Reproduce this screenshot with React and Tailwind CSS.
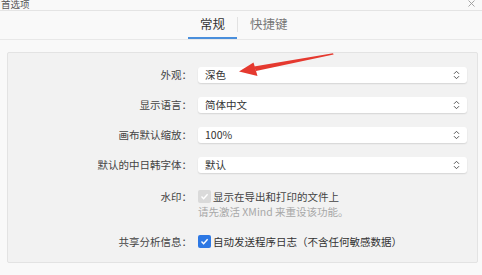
import React from 'react'

const font = { fontFamily: '"Noto Sans CJK SC", "Noto Sans", sans-serif' }

function Chevrons() {
  return (
    <svg width="7" height="10" viewBox="0 0 7 10" className="text-[#555]">
      <path d="M1 3.8 L3.5 1.3 L6 3.8" fill="none" stroke="currentColor" strokeWidth="1" />
      <path d="M1 6.2 L3.5 8.7 L6 6.2" fill="none" stroke="currentColor" strokeWidth="1" />
    </svg>
  )
}

function Select({ value }) {
  return (
    <div className="flex h-[16px] w-[269px] items-center justify-between rounded-[3px] bg-white pl-[7px] pr-[7px] text-[10.5px] text-[#333] shadow-[0_1px_1.5px_rgba(0,0,0,0.12)]">
      <span>{value}</span>
      <Chevrons />
    </div>
  )
}

function Check({ disabled }) {
  return (
    <div
      className={
        'flex h-[13px] w-[13px] shrink-0 items-center justify-center rounded-[2px] ' +
        (disabled ? 'bg-[#dadada]' : 'bg-[#2d78e4]')
      }
    >
      <svg width="9" height="9" viewBox="0 0 9 9">
        <path d="M1.5 4.6 L3.6 6.7 L7.6 2.2" fill="none" stroke="white" strokeWidth="1.4" />
      </svg>
    </div>
  )
}

function Row({ label, className = '', children }) {
  return (
    <div className={'flex items-center ' + className}>
      <div className="w-[187px] shrink-0 pr-[3px] text-right text-[10.5px] text-[#444]">{label}：</div>
      <div className="pl-[3px]">{children}</div>
    </div>
  )
}

export default function App() {
  return (
    <div className="relative h-[275px] w-[482px] overflow-hidden bg-[#f9f9f9]" style={font}>
      {/* title bar */}
      <div className="flex h-[11px] items-end justify-between overflow-hidden border-b border-[#e4e4e4]">
        <span className="-mb-[1px] pl-[1px] text-[9.5px] leading-[14px] text-[#555]">首选项</span>
        <svg width="7" height="7" viewBox="0 0 7 7" className="mb-[3px] mr-[7px]">
          <path d="M0.5 0.5 L6.5 6.5 M6.5 0.5 L0.5 6.5" stroke="#9a9a9a" strokeWidth="0.9" />
        </svg>
      </div>

      {/* tabs */}
      <div className="flex h-[29px] items-end border-b border-[#e8e8e8] pl-[188px]">
        <div className="flex h-full w-[49px] items-center justify-center border-b-2 border-[#4a8fdc] pt-[1px] text-[12.5px] text-[#333]">
          常规
        </div>
        <div className="mb-[7px] h-[15px] w-px bg-[#e2e2e2]" />
        <div className="flex h-full items-center pb-[1px] pl-[12px] text-[12.5px] text-[#777]">快捷键</div>
      </div>

      {/* panel */}
      <div className="ml-[7px] mt-[12px] flex h-[211px] w-[471px] flex-col rounded-[2px] border border-[#e3e3e3] bg-[#f2f2f2] pt-[14px]">
        <Row label="外观">
          <Select value="深色" />
        </Row>
        <Row label="显示语言" className="mt-[14px]">
          <Select value="简体中文" />
        </Row>
        <Row label="画布默认缩放" className="mt-[14px]">
          <Select value="100%" />
        </Row>
        <Row label="默认的中日韩字体" className="mt-[14px]">
          <Select value="默认" />
        </Row>
        <div className="mt-[17px] flex items-start">
          <div className="w-[187px] shrink-0 pr-[3px] text-right text-[10.5px] leading-[13px] text-[#444]">水印：</div>
          <div className="flex flex-col pl-[3px]">
            <div className="flex items-center gap-[2px]">
              <Check disabled />
              <span className="text-[10.5px] leading-[13px] text-[#444]">显示在导出和打印的文件上</span>
            </div>
            <span className="mt-[2px] text-[10.5px] leading-[14px] text-[#a8a8a8]">请先激活 XMind 来重设该功能。</span>
          </div>
        </div>
        <div className="mt-[16px] flex items-center">
          <div className="w-[187px] shrink-0 pr-[3px] text-right text-[10.5px] leading-[13px] text-[#444]">共享分析信息：</div>
          <div className="flex items-center gap-[2px] pl-[3px]">
            <Check />
            <span className="text-[10.5px] leading-[13px] text-[#333]">自动发送程序日志（不含任何敏感数据）</span>
          </div>
        </div>
      </div>

      {/* red annotation arrow */}
      <svg className="pointer-events-none absolute left-0 top-0" width="482" height="275" viewBox="0 0 482 275">
        <polygon points="333,53.2 333.6,54.6 256,71 254,66.6" fill="#e5392f" />
        <polygon points="239,71.5 253.5,62.5 257.5,76" fill="#e5392f" />
      </svg>
    </div>
  )
}
